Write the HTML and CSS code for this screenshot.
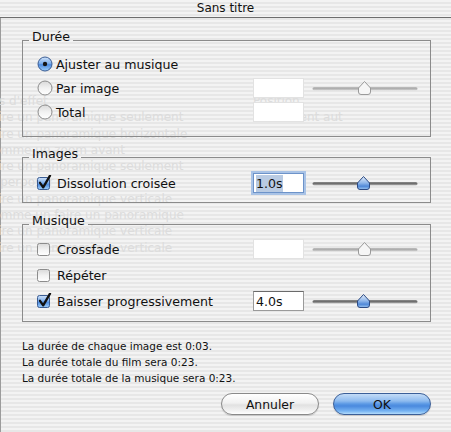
FILE: index.html
```html
<!DOCTYPE html>
<html lang="fr">
<head>
<meta charset="utf-8">
<title>Sans titre</title>
<link rel="stylesheet" href="styles.css">
</head>
<body>
<svg class="defs" width="0" height="0" aria-hidden="true">
  <defs>
    <linearGradient id="gBlue" x1="0" y1="0" x2="0" y2="1">
      <stop offset="0" stop-color="#cfe1f7"/>
      <stop offset="0.45" stop-color="#7fb0ee"/>
      <stop offset="0.55" stop-color="#4d8be0"/>
      <stop offset="1" stop-color="#9fd0fb"/>
    </linearGradient>
    <linearGradient id="gWhite" x1="0" y1="0" x2="0" y2="1">
      <stop offset="0" stop-color="#d9d9d9"/>
      <stop offset="0.5" stop-color="#f2f2f2"/>
      <stop offset="1" stop-color="#ffffff"/>
    </linearGradient>
    <linearGradient id="gThumb" x1="0" y1="0" x2="0" y2="1">
      <stop offset="0" stop-color="#e4eefa"/>
      <stop offset="0.5" stop-color="#8fb6ea"/>
      <stop offset="0.75" stop-color="#4f88d8"/>
      <stop offset="1" stop-color="#9cc6f2"/>
    </linearGradient>
    <linearGradient id="gTrack" x1="0" y1="0" x2="0" y2="1">
      <stop offset="0" stop-color="#8a8a8a"/>
      <stop offset="0.5" stop-color="#6a6a6a"/>
      <stop offset="1" stop-color="#c4c4c4"/>
    </linearGradient>
    <linearGradient id="gTrackOff" x1="0" y1="0" x2="0" y2="1">
      <stop offset="0" stop-color="#bdbdbd"/>
      <stop offset="0.5" stop-color="#acacac"/>
      <stop offset="1" stop-color="#dedede"/>
    </linearGradient>
  </defs>
</svg>

<div class="window">
  <div class="titlebar">Sans titre</div>

  <div class="sheet">
    <div class="backdrop" aria-hidden="true">
      <span>Pas d'effet</span><span>Position</span>
      <span>Faire un panoramique seulement</span><span>Défilement aut</span>
      <span>Faire un panoramique horizontale</span><span></span>
      <span>Comme un zoom avant</span><span></span>
      <span>Faire un panoramique seulement</span><span></span>
      <span>Superposer</span><span></span>
      <span>Faire un panoramique verticale</span><span></span>
      <span>Comme un faire un panoramique</span><span></span>
      <span>Faire un panoramique verticale</span><span></span>
      <span>Faire un panoramique verticale</span><span></span>
    </div>

    <fieldset class="group g1">
      <legend>Durée</legend>
      <div class="rows">
        <div class="row">
          <label class="opt">
            <svg class="radio" width="16" height="16" viewBox="0 0 16 16"><circle cx="8" cy="8" r="7" fill="url(#gBlue)" stroke="#3a5c93" stroke-width="1"/><circle cx="8" cy="8" r="2.2" fill="#141414"/></svg>
            Ajuster au musique
          </label>
        </div>
        <div class="row">
          <label class="opt">
            <svg class="radio" width="16" height="16" viewBox="0 0 16 16"><circle cx="8" cy="8" r="7" fill="url(#gWhite)" stroke="#8c8c8c" stroke-width="1"/></svg>
            Par image
          </label>
          <span class="field off"></span>
          <svg class="slider" width="106" height="16" viewBox="0 0 106 16"><rect x="0.5" y="7" width="105" height="3.5" rx="1.75" fill="url(#gTrackOff)"/><path d="M52.5 1.5 L58.5 8 V12 Q58.5 14.5 56 14.5 H49 Q46.5 14.5 46.5 12 V8 Z" fill="#f6f6f6" stroke="#9a9a9a" stroke-width="1"/></svg>
        </div>
        <div class="row">
          <label class="opt">
            <svg class="radio" width="16" height="16" viewBox="0 0 16 16"><circle cx="8" cy="8" r="7" fill="url(#gWhite)" stroke="#8c8c8c" stroke-width="1"/></svg>
            Total
          </label>
          <span class="field off"></span>
          <span class="slider-space"></span>
        </div>
      </div>
    </fieldset>

    <fieldset class="group g2">
      <legend>Images</legend>
      <div class="rows">
        <div class="row">
          <label class="opt">
            <svg class="check" width="16" height="16" viewBox="0 0 16 16"><rect x="0.5" y="2.5" width="12" height="12" rx="2" fill="url(#gBlue)" stroke="#3a5c93"/><path d="M3 7.8 L6.2 12.4 L13 0.6" fill="none" stroke="#111" stroke-width="2.3" stroke-linecap="round" stroke-linejoin="round"/></svg>
            Dissolution croisée
          </label>
          <span class="field focus"><span class="sel">1.0s</span></span>
          <svg class="slider" width="106" height="16" viewBox="0 0 106 16"><rect x="0.5" y="7" width="105" height="3.5" rx="1.75" fill="url(#gTrack)"/><path d="M51.5 1.5 L57.5 8 V12 Q57.5 14.5 55 14.5 H48 Q45.5 14.5 45.5 12 V8 Z" fill="url(#gThumb)" stroke="#2d4b84" stroke-width="1"/></svg>
        </div>
      </div>
    </fieldset>

    <fieldset class="group g3">
      <legend>Musique</legend>
      <div class="rows">
        <div class="row">
          <label class="opt">
            <svg class="check" width="16" height="16" viewBox="0 0 16 16"><rect x="0.5" y="2.5" width="12" height="12" rx="2" fill="url(#gWhite)" stroke="#8c8c8c"/></svg>
            Crossfade
          </label>
          <span class="field off"></span>
          <svg class="slider" width="106" height="16" viewBox="0 0 106 16"><rect x="0.5" y="7" width="105" height="3.5" rx="1.75" fill="url(#gTrackOff)"/><path d="M52.5 1.5 L58.5 8 V12 Q58.5 14.5 56 14.5 H49 Q46.5 14.5 46.5 12 V8 Z" fill="#f6f6f6" stroke="#9a9a9a" stroke-width="1"/></svg>
        </div>
        <div class="row">
          <label class="opt">
            <svg class="check" width="16" height="16" viewBox="0 0 16 16"><rect x="0.5" y="2.5" width="12" height="12" rx="2" fill="url(#gWhite)" stroke="#8c8c8c"/></svg>
            Répéter
          </label>
        </div>
        <div class="row">
          <label class="opt">
            <svg class="check" width="16" height="16" viewBox="0 0 16 16"><rect x="0.5" y="2.5" width="12" height="12" rx="2" fill="url(#gBlue)" stroke="#3a5c93"/><path d="M3 7.8 L6.2 12.4 L13 0.6" fill="none" stroke="#111" stroke-width="2.3" stroke-linecap="round" stroke-linejoin="round"/></svg>
            Baisser progressivement
          </label>
          <span class="field on">4.0s</span>
          <svg class="slider" width="106" height="16" viewBox="0 0 106 16"><rect x="0.5" y="7" width="105" height="3.5" rx="1.75" fill="url(#gTrack)"/><path d="M51.5 1.5 L57.5 8 V12 Q57.5 14.5 55 14.5 H48 Q45.5 14.5 45.5 12 V8 Z" fill="url(#gThumb)" stroke="#2d4b84" stroke-width="1"/></svg>
        </div>
      </div>
    </fieldset>

    <div class="info">
      <p>La durée de chaque image est 0:03.</p>
      <p>La durée totale du film sera 0:23.</p>
      <p>La durée totale de la musique sera 0:23.</p>
    </div>

    <div class="buttons">
      <button class="btn">Annuler</button>
      <button class="btn default">OK</button>
    </div>
  </div>
</div>
</body>
</html>
```

FILE: styles.css
```css
html, body {
  margin: 0;
  padding: 0;
}

body {
  width: 451px;
  height: 432px;
  overflow: hidden;
  font-family: "DejaVu Sans", "Liberation Sans", sans-serif;
  color: #111;
  background: repeating-linear-gradient(to bottom, #f3f3f3 0 2px, #e7e7e7 2px 4px);
}

.defs {
  display: block;
  width: 0;
  height: 0;
}

.window {
  width: 451px;
  height: 432px;
  overflow: hidden;
  display: flex;
  flex-direction: column;
}

.titlebar {
  height: 17px;
  border-bottom: 1px solid #6d6d6d;
  text-align: center;
  font-size: 12px;
  line-height: 17px;
  color: #111;
}

.sheet {
  flex: 1;
  position: relative;
  z-index: 0;
  border-left: 1px solid #9c9c9c;
  padding: 11px 20px 0 21px;
  display: flex;
  flex-direction: column;
}

.backdrop {
  position: absolute;
  z-index: -1;
  top: 75px;
  left: -16px;
  display: grid;
  grid-template-columns: 268px auto;
  font-size: 12px;
  line-height: 16.3px;
  color: #dcdcdc;
  white-space: nowrap;
}

.group {
  margin: 0;
  border: 1px solid #8b8b8b;
  padding: 0 0 0 6px;
  min-width: 0;
}

.group legend {
  padding: 0 3px 8px;
  font-size: 12.6px;
  line-height: 15px;
}

.g1 .rows { padding: 0 0 12px; }
.g2 { margin-top: 9px; }
.g2 .rows { padding: 2px 0 7px; }
.g3 { margin-top: 10px; }
.g3 .rows { padding: 0 0 7px; }

.rows {
  display: flex;
  flex-direction: column;
}

.row {
  display: flex;
  align-items: center;
  height: 24px;
  padding: 0 12px 0 8px;
  font-size: 12.6px;
}

.g3 .row { height: 26px; }

.opt {
  flex: 1;
  display: flex;
  align-items: center;
  gap: 3px;
  white-space: nowrap;
}

.check { margin-right: 1px; }

.field {
  box-sizing: border-box;
  width: 51px;
  height: 20px;
  background: #fff;
  display: flex;
  align-items: center;
  padding-left: 2px;
  font-size: 12.6px;
}

.field.off {
  border: 1px solid #e2e2e2;
}

.field.on {
  border: 1px solid #9a9a9a;
  border-top-color: #6a6a6a;
}

.field.focus {
  border: 1px solid #6d93c9;
  box-shadow: 0 0 0 2px #a9c3e6;
}

.sel {
  background: #b9cbe3;
  padding: 1px 0;
}

.slider {
  display: block;
  margin-left: 8px;
}

.slider-space {
  width: 114px;
}

.info {
  margin-top: 16px;
  font-size: 10.5px;
  line-height: 16px;
}

.info p {
  margin: 0;
}

.buttons {
  margin-top: 7px;
  display: flex;
  justify-content: flex-end;
  gap: 14px;
}

.btn {
  box-sizing: border-box;
  width: 98px;
  height: 22px;
  border-radius: 11px;
  font-family: "DejaVu Sans", "Liberation Sans", sans-serif;
  font-size: 12.4px;
  color: #111;
  padding: 0;
  border: 1px solid #8a8a8a;
  background: linear-gradient(to bottom, #ffffff 0%, #f1f1f1 45%, #e1e1e1 55%, #f3f3f3 85%, #ffffff 100%);
  box-shadow: 0 1px 1px rgba(0,0,0,0.15);
}

.btn.default {
  border-color: #3b5f98;
  background: linear-gradient(to bottom, #c4dcf7 0%, #8ebbef 35%, #5a98e4 50%, #4a89de 60%, #76b3f2 85%, #b3dcfc 100%);
}
```
